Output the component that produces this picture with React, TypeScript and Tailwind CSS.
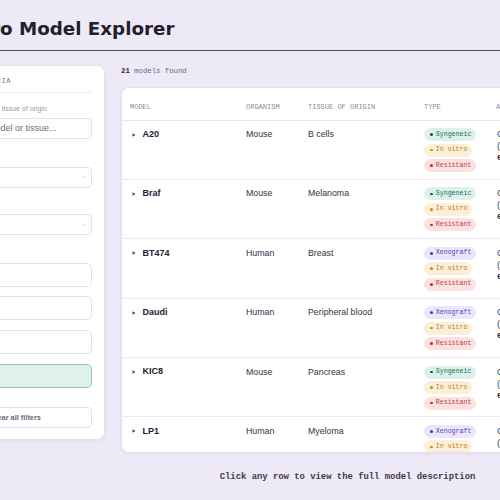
import type React from 'react';
import { Search } from 'lucide-react';

type Kind = 'Syngeneic' | 'Xenograft' | 'In vitro' | 'Resistant';

interface ModelRow {
  name: string;
  organism: string;
  tissue: string;
  types: Kind[];
  notes: [string, string, string];
}

const rows: ModelRow[] = [
  { name: 'A20', organism: 'Mouse', tissue: 'B cells', types: ['Syngeneic', 'In vitro', 'Resistant'], notes: ['Checkpoint', '(anti-PD-1)', 'efficacy'] },
  { name: 'Braf', organism: 'Mouse', tissue: 'Melanoma', types: ['Syngeneic', 'In vitro', 'Resistant'], notes: ['Combination', '(BRAF/MEK)', 'escape'] },
  { name: 'BT474', organism: 'Human', tissue: 'Breast', types: ['Xenograft', 'In vitro', 'Resistant'], notes: ['Cytotoxic', '(HER2+)', 'exposure'] },
  { name: 'Daudi', organism: 'Human', tissue: 'Peripheral blood', types: ['Xenograft', 'In vitro', 'Resistant'], notes: ['CD20 mAb', '(rituximab)', 'efficacy'] },
  { name: 'KIC8', organism: 'Mouse', tissue: 'Pancreas', types: ['Syngeneic', 'In vitro', 'Resistant'], notes: ['Chemo', '(gemcitabine)', 'exposure'] },
  { name: 'LP1', organism: 'Human', tissue: 'Myeloma', types: ['Xenograft', 'In vitro', 'Resistant'], notes: ['CD38 mAb', '(daratumumab)', 'efficacy'] },
];

const badgeStyles: Record<Kind, { box: string; dot: string }> = {
  Syngeneic: { box: 'bg-[#dcf1eb] text-[#226e5d]', dot: 'bg-[#1b5246]' },
  Xenograft: { box: 'bg-[#ebe6fb] text-[#5a45b8]', dot: 'bg-[#4c39a8]' },
  'In vitro': { box: 'bg-[#fcefd8] text-[#b97b1f]', dot: 'bg-[#c9861f]' },
  Resistant: { box: 'bg-[#fbe1e0] text-[#bb3f3f]', dot: 'bg-[#ad3333]' },
};

const Badge: React.FC<{ kind: Kind }> = ({ kind }) => (
  <span
    className={`inline-flex h-[13px] items-center self-start rounded-full pl-[6px] pr-[5px] font-['Liberation_Mono',monospace] text-[6.6px] ${badgeStyles[kind].box}`}
  >
    <span className={`mr-[3.2px] h-[2.6px] w-[2.6px] rounded-full ${badgeStyles[kind].dot}`} />
    {kind}
  </span>
);

const Chevron = () => (
  <svg width="3" height="2" viewBox="0 0 3 2" className="shrink-0">
    <path d="M0.3 0.4 L1.5 1.6 L2.7 0.4" fill="none" stroke="#a9a6b6" strokeWidth="0.7" />
  </svg>
);

const Label: React.FC<{ text: string; className?: string }> = ({ text, className = '' }) => (
  <div className={`text-[7px] leading-[10px] text-[#9a97a8] ${className}`}>{text}</div>
);

const Sidebar = () => (
  <aside className="w-[179px] shrink-0 self-start rounded-[8px] border border-[#e4e0f1] bg-white px-3 pb-[11px] pt-[10px] shadow-[0_1px_3px_rgba(80,60,140,0.08)]">
    <div className="border-b border-dotted border-[#d9d5e6] pb-[6px]">
      <div className="font-['Liberation_Mono',monospace] text-[7px] leading-[10px] tracking-[0.6px] text-[#77748a]">
        FILTER CRITERIA
      </div>
    </div>

    <Label text="Search by model or tissue of origin" className="mt-[10.5px]" />
    <div className="mt-[4.5px] flex h-[21px] items-center gap-[1px] rounded-[4px] border border-[#e4e0f1] bg-white px-2 text-[9px] text-[#6e6b7d]">
      <Search className="h-[8px] w-[8px] text-[#a9a6b6]" />
      <span>Search model or tissue...</span>
    </div>

    <Label text="Organism" className="mt-[13px]" />
    <div className="mt-[4.5px] flex h-[21px] items-center justify-between rounded-[4px] border border-[#e4e0f1] bg-white pl-2 pr-[5px] text-[8px] text-[#4a4857]">
      <span>All</span>
      <Chevron />
    </div>

    <Label text="Tissue" className="mt-[12px]" />
    <div className="mt-[4.5px] flex h-[21px] items-center justify-between rounded-[4px] border border-[#e4e0f1] bg-white pl-2 pr-[5px] text-[8px] text-[#4a4857]">
      <span>All</span>
      <Chevron />
    </div>

    <Label text="Type" className="mt-[13px]" />
    <div className="mt-[4.5px] flex flex-col gap-[9.7px]">
      {['Xenog.', 'Synge.', 'In vit.'].map((label) => (
        <div
          key={label}
          className="flex h-[24px] items-center rounded-[5px] border border-[#e4e0f1] bg-white px-2 text-[7px] text-[#4a4857]"
        >
          {label}
        </div>
      ))}
      <div className="flex h-[24px] items-center rounded-[5px] border-[1.5px] border-[#8fcbbd] bg-[#e0f1ed] px-2 text-[7px] text-[#2b7a68]">
        Resist.
      </div>
    </div>

    <button className="mt-[19px] flex h-[21px] w-full items-center justify-center rounded-[4px] border border-[#e4e0f1] bg-white text-[7.4px] font-bold text-[#6b6878]">
      Clear all filters
    </button>
  </aside>
);

const cols = 'grid grid-cols-[116px_62px_116px_72px_1fr] pl-[8px]';

const Table = () => (
  <div className="mt-[10px] h-[366px] overflow-hidden rounded-[8px] border border-[#e4e0f1] bg-white shadow-[0_1px_3px_rgba(80,60,140,0.08)]">
    <div className={`${cols} h-[32.5px] border-b border-[#e8e4f4] pt-[15px] font-['Liberation_Mono',monospace] text-[7px] leading-[9px] text-[#8d8a9c]`}>
      <div>MODEL</div>
      <div>ORGANISM</div>
      <div>TISSUE OF ORIGIN</div>
      <div>TYPE</div>
      <div className="whitespace-nowrap">APPLICATION</div>
    </div>

    {rows.map((row) => (
      <div key={row.name} className={`${cols} h-[59.4px] border-b border-[#ece8f6] pt-[7.5px]`}>
        <div className="flex h-[13px] items-center pl-[2px]">
          <svg width="4" height="4" viewBox="0 0 4 4" className="mr-[6.5px]">
            <path d="M0.5 0.3 L3.5 2 L0.5 3.7 Z" fill="#4a4857" />
          </svg>
          <span className="text-[9px] font-bold text-[#23222e]">{row.name}</span>
        </div>
        <div className="text-[8.8px] leading-[13px] text-[#34333f]">{row.organism}</div>
        <div className="text-[8.8px] leading-[13px] text-[#34333f]">{row.tissue}</div>
        <div className="flex flex-col gap-[2.5px]">
          {row.types.map((t) => (
            <Badge key={t} kind={t} />
          ))}
        </div>
        <div className="whitespace-nowrap pl-[1px] text-[9px] leading-[12px] text-[#3a3946]">
          <div>{row.notes[0]}</div>
          <div>{row.notes[1]}</div>
          <div className="font-['Liberation_Mono',monospace] font-bold text-[#2e2c3a]">{row.notes[2]}</div>
        </div>
      </div>
    ))}
  </div>
);

export default function App() {
  return (
    <div className="h-screen w-full overflow-hidden bg-[#ede9f7] font-['Liberation_Sans',Arial,sans-serif]">
      <div className="flex justify-center">
        <div className="w-[648px] shrink-0">
          <header className="border-b-[1.5px] border-[#4b4a57] pb-[8.5px] pt-[17px]">
            <h1 className="pl-[10px] font-['DejaVu_Sans',sans-serif] text-[18.3px] font-bold leading-[24px] text-[#22212b]">
              In Vitro Model Explorer
            </h1>
          </header>

          <div className="flex gap-4 pt-[14.5px]">
            <Sidebar />

            <main className="min-w-0 flex-1">
              <div className="font-['Liberation_Mono',monospace] text-[7.3px] leading-[12px] text-[#6b6880]">
                <span className="font-bold text-[#2e2c3a]">21</span> models found
              </div>
              <Table />
              <p className="mt-[18px] text-center font-['Liberation_Mono',monospace] text-[8.9px] font-bold leading-[12px] text-[#3e3b4e]">
                Click any row to view the full model description
              </p>
            </main>
          </div>
        </div>
      </div>
    </div>
  );
}
